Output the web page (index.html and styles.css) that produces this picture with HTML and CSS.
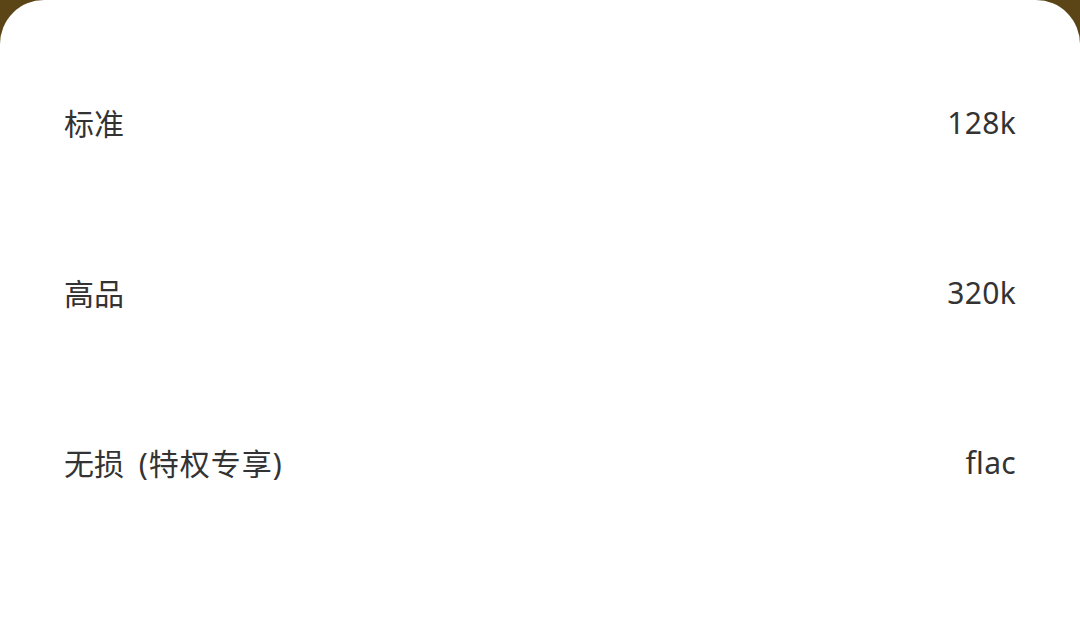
FILE: index.html
```html
<!DOCTYPE html>
<html lang="zh">
<head>
<meta charset="utf-8">
<link rel="stylesheet" href="styles.css">
</head>
<body>
<div class="sheet">
  <div class="row"><span class="label">标准</span><span class="value">128k</span></div>
  <div class="row"><span class="label">高品</span><span class="value">320k</span></div>
  <div class="row"><span class="label">无损 <span class="note">(特权专享)</span></span><span class="value">flac</span></div>
</div>
</body>
</html>
```
FILE: styles.css
```css
html, body {
  margin: 0;
  padding: 0;
  width: 1080px;
  height: 632px;
  overflow: hidden;
  background: #5b4517;
}
.sheet {
  background: #ffffff;
  height: 632px;
  border-radius: 44px 44px 0 0;
  padding: 37px 64px 0 64px;
  box-sizing: border-box;
  font-family: "Noto Sans", "Noto Sans CJK SC", sans-serif;
  color: #333333;
}
.row {
  height: 170px;
  display: flex;
  align-items: center;
  justify-content: space-between;
  font-size: 30px;
}
.label {
  word-spacing: 7px;
}
.note {
  letter-spacing: 1px;
}
.value {
  letter-spacing: 0.3px;
}
```
